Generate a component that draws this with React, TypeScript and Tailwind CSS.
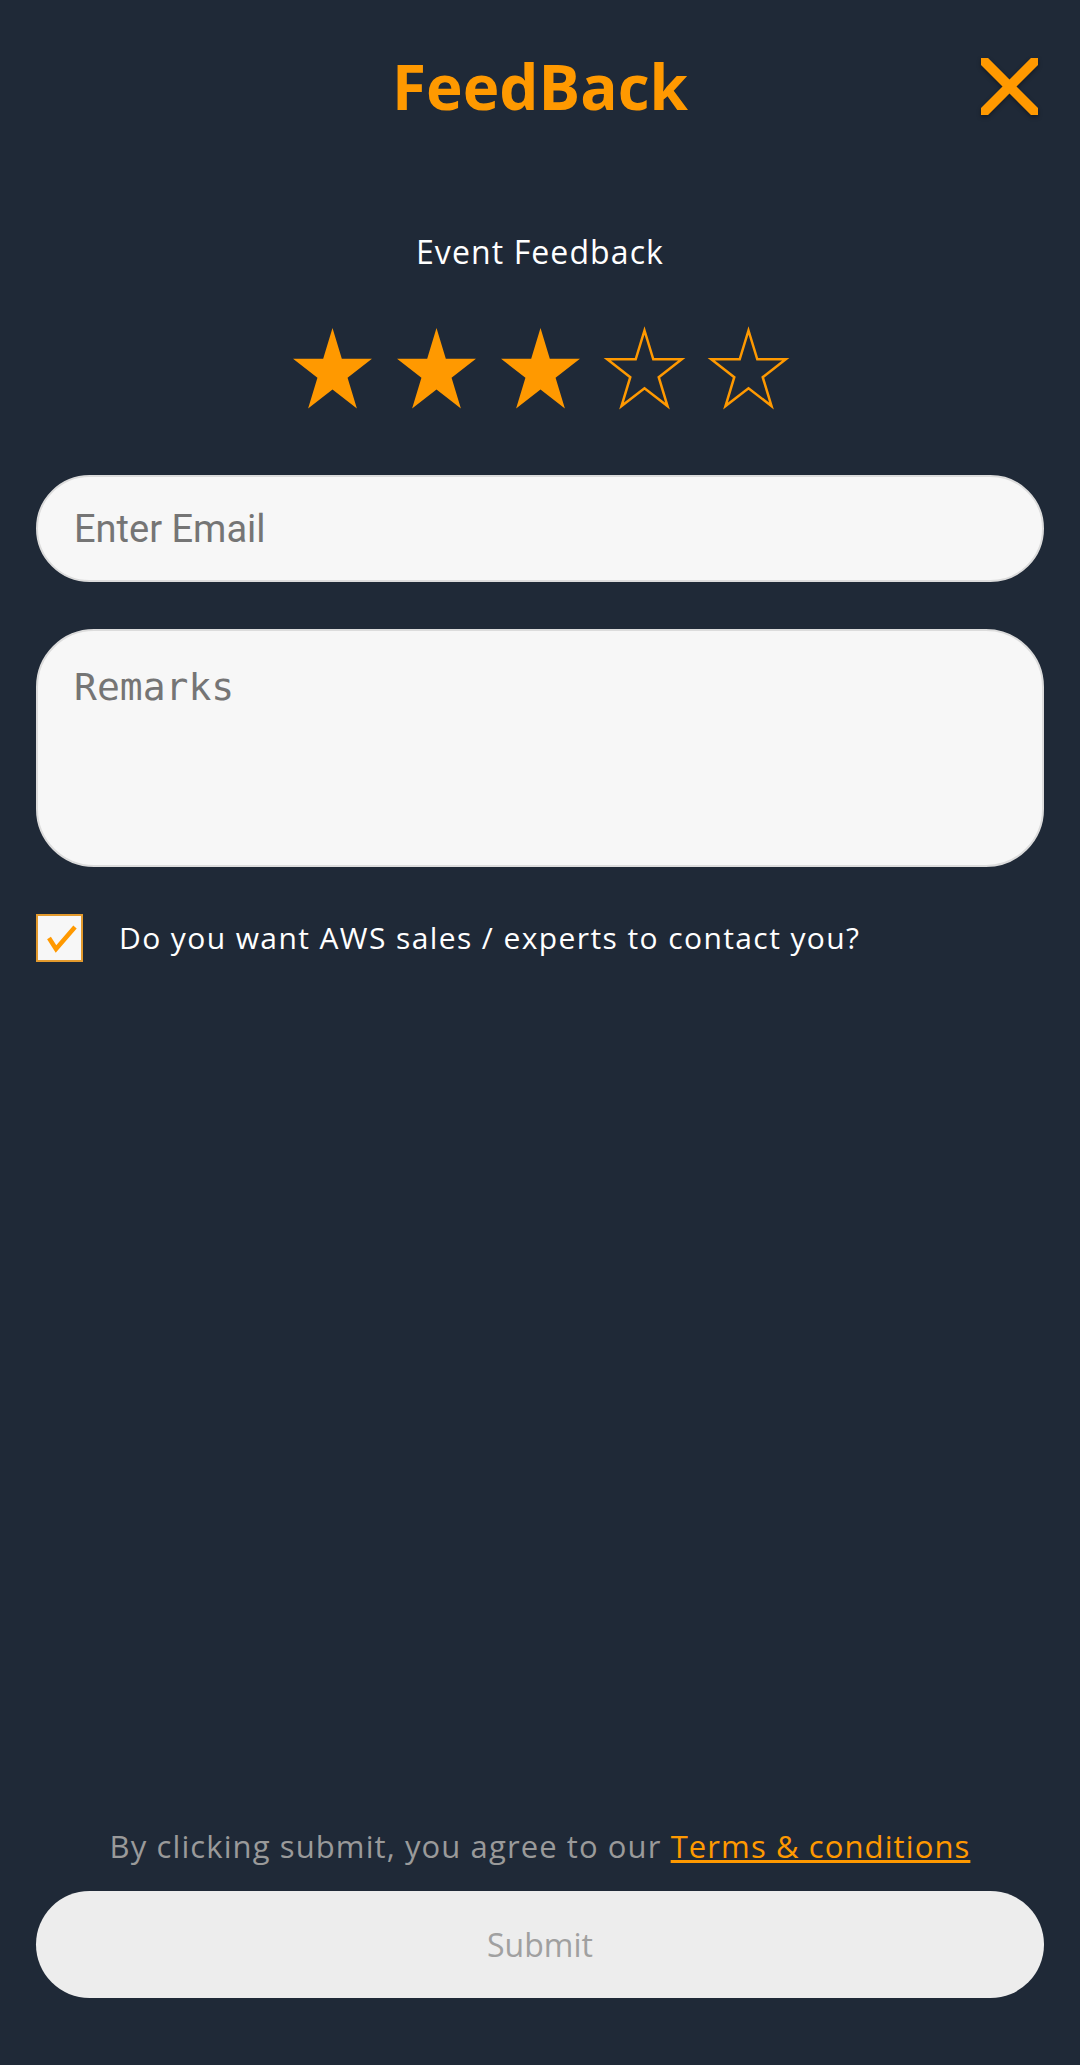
import { useState } from "react";

const STAR = "50,0 61.23,34.55 97.55,34.55 68.16,55.9 79.39,90.45 50,69.1 20.61,90.45 31.84,55.9 2.45,34.55 38.77,34.55";

function Star({ filled }: { filled: boolean }) {
  return (
    <svg
      viewBox={filled ? "0 0 100 91" : "-3 -3 106 97"}
      preserveAspectRatio="none"
      className="h-[81px] w-[83px] overflow-visible"
      aria-hidden="true"
    >
      <polygon
        points={STAR}
        fill={filled ? "#ff9900" : "none"}
        stroke="#ff9900"
        strokeWidth={filled ? 0 : 2.5}
        vectorEffect="non-scaling-stroke"
      />
    </svg>
  );
}

function CloseIcon() {
  return (
    <svg viewBox="0 0 57 57" className="h-[57px] w-[57px] drop-shadow-[0_2px_2px_rgba(0,0,0,0.35)]" aria-hidden="true">
      <line x1="-6" y1="-6" x2="63" y2="63" stroke="#ff9900" strokeWidth="10" />
      <line x1="63" y1="-6" x2="-6" y2="63" stroke="#ff9900" strokeWidth="10" />
    </svg>
  );
}

export default function App() {
  const [rating, setRating] = useState(3);
  const [contact, setContact] = useState(true);

  return (
    <div className="flex h-screen flex-col bg-[#1f2937] font-['Open_Sans',sans-serif]">
      <header className="grid h-[172px] grid-cols-[1fr_auto_1fr] items-center">
        <span />
        <h1 className="text-[62px] font-bold leading-none text-[#ff9900]">FeedBack</h1>
        <div className="flex justify-end pr-[42px]">
          <button type="button" aria-label="Close">
            <CloseIcon />
          </button>
        </div>
      </header>

      <p className="mt-[58px] text-center text-[32px] leading-[44px] tracking-[1.1px] text-white">Event Feedback</p>

      <div className="mt-[54px] flex justify-center gap-[21px]">
        {[1, 2, 3, 4, 5].map((n) => (
          <button key={n} type="button" onClick={() => setRating(n)} aria-label={`${n} stars`}>
            <Star filled={n <= rating} />
          </button>
        ))}
      </div>

      <div className="mx-[36px] mt-[66px] flex flex-col gap-[47px]">
        <input
          type="email"
          placeholder="Enter Email"
          className="h-[107px] rounded-full border-2 border-[#dcdcdc] bg-[#f7f7f7] pl-[36px] font-['Roboto',sans-serif] text-[38px] outline-none placeholder:text-[#757575]"
        />
        <textarea
          placeholder="Remarks"
          className="h-[238px] resize-none rounded-[58px] border-2 border-[#dcdcdc] bg-[#f7f7f7] pl-[36px] pt-[34px] font-['DejaVu_Sans_Mono',monospace] text-[38px] leading-[44px] outline-none placeholder:text-[#757575]"
        />
      </div>

      <label className="mx-[36px] mt-[47px] flex items-center gap-[36px]">
        <button
          type="button"
          onClick={() => setContact(!contact)}
          className="flex h-[48px] w-[47px] shrink-0 items-center justify-center border-2 border-[#e39a2d] bg-[#f7f7f7]"
          aria-label="Contact me"
        >
          {contact && (
            <svg viewBox="0 0 43 44" className="h-[44px] w-[43px]" aria-hidden="true">
              <polyline points="11,22 18,33 37,11" fill="none" stroke="#ff9900" strokeWidth="4.5" />
            </svg>
          )}
        </button>
        <span className="text-[30px] leading-[40px] tracking-[1.4px] text-white">Do you want AWS sales / experts to contact you?</span>
      </label>

      <div className="flex-1" />

      <footer className="mx-[36px] mb-[67px] flex flex-col">
        <p className="text-center text-[31px] leading-[44px] tracking-[1.1px] text-[#9a9a9a]">
          By clicking submit, you agree to our{" "}
          <a href="#" className="text-[#ff9900] underline">Terms &amp; conditions</a>
        </p>
        <button
          type="button"
          className="mt-[23px] h-[107px] rounded-full bg-[#ededed] text-[32px] text-[#a0a0a0]"
        >
          Submit
        </button>
      </footer>
    </div>
  );
}
